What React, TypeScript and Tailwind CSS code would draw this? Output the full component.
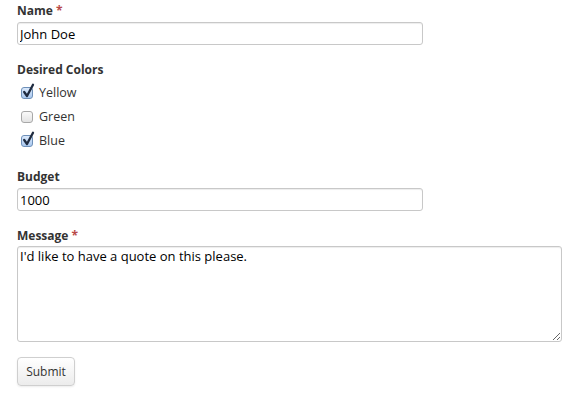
import React from "react";

function Box({ checked }: { checked: boolean }) {
  return (
    <span className="relative inline-block w-[12px] h-[12px] mr-[6px] shrink-0">
      <span
        className={
          checked
            ? "absolute inset-0 rounded-[3px] border border-[#6d8fb8] bg-gradient-to-b from-[#dbe9fb] to-[#a9c8ef]"
            : "absolute inset-0 rounded-[3px] border border-[#a8a8a8] bg-gradient-to-b from-[#fafafa] to-[#e3e3e3]"
        }
      />
      {checked && (
        <svg className="absolute left-[1px] top-[-4px]" width="13" height="15" viewBox="0 0 13 15">
          <path d="M2.2 9 L5 13 L11 1.8" fill="none" stroke="#1f2b40" strokeWidth="2.3" strokeLinecap="round" strokeLinejoin="round" />
        </svg>
      )}
    </span>
  );
}

export default function App() {
  const label = "block text-[12px] leading-[17px] font-bold text-[#333]";
  const input =
    "block w-[406px] h-[23px] border border-[#c8c8c8] rounded-[3px] px-[2px] text-[13px] text-black shadow-[inset_0_1px_1px_rgba(0,0,0,0.075)] outline-none";
  return (
    <div className="w-[574px] h-[405px] bg-white pl-[17px] pt-[2px]" style={{ fontFamily: "'Open Sans', sans-serif" }}>
      <div>
        <label className={label + " mb-[3px]"}>
          Name <span className="text-[#b94a48]">*</span>
        </label>
        <input className={input} defaultValue="John Doe" />
      </div>
      <div className="mt-[16px]">
        <div className={label + " mb-[3px]"}>Desired Colors</div>
        {[
          ["Yellow", true],
          ["Green", false],
          ["Blue", true],
        ].map(([n, c]) => (
          <div key={n as string} className="flex items-center h-[24px] pl-[4px] text-[12.5px] text-[#333]">
            <Box checked={c as boolean} />
            <span>{n as string}</span>
          </div>
        ))}
      </div>
      <div className="mt-[15px]">
        <label className={label + " mb-[3px]"}>Budget</label>
        <input className={input} defaultValue="1000" />
      </div>
      <div className="mt-[16px]">
        <label className={label + " mb-[2px]"}>
          Message <span className="text-[#b94a48]">*</span>
        </label>
        <textarea
          className="block w-[545px] h-[96px] border border-[#c8c8c8] rounded-[3px] px-[2px] py-[1px] text-[13px] leading-[17px] text-black shadow-[inset_0_1px_1px_rgba(0,0,0,0.075)] outline-none resize"
          defaultValue="I'd like to have a quote on this please."
        />
      </div>
      <button className="mt-[15px] w-[58px] h-[29px] border border-[#cfcfcf] rounded-[4px] bg-gradient-to-b from-white to-[#ececec] text-[12px] text-[#333] shadow-[0_1px_2px_rgba(0,0,0,0.08)]">
        Submit
      </button>
    </div>
  );
}
